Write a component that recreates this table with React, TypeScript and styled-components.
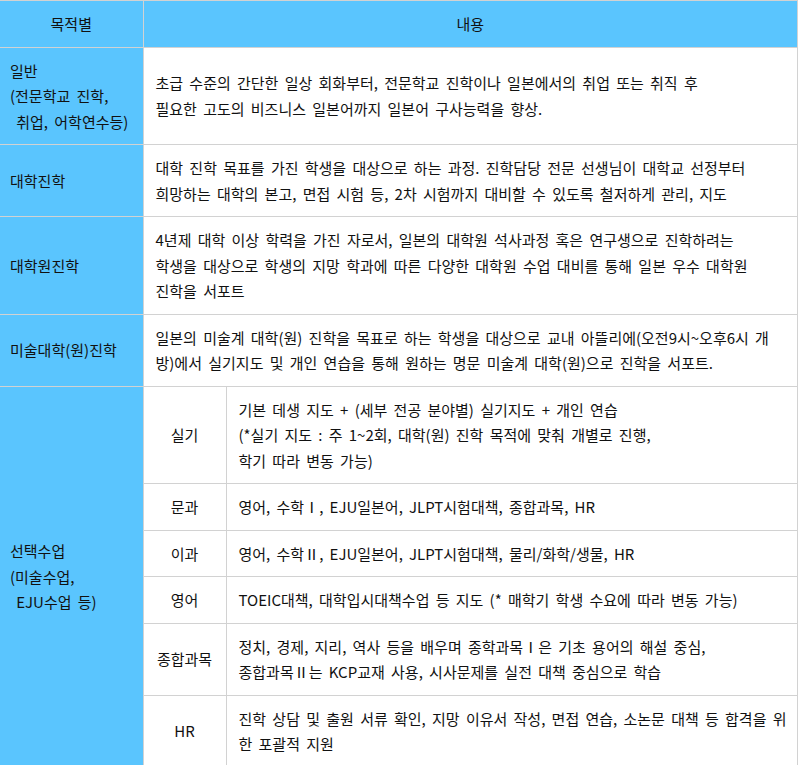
import React from 'react';
import styled, { createGlobalStyle } from 'styled-components';

const GlobalStyle = createGlobalStyle`
  html, body {
    margin: 0;
    padding: 0;
    background: #ffffff;
  }
  body {
    font-family: "Noto Sans CJK KR", "Noto Sans", sans-serif;
    color: #111111;
  }
`;

const BORDER = '#d2d2d2';
const BLUE = '#5ac5fe';

const Table = styled.table`
  width: 798px;
  table-layout: fixed;
  border-collapse: collapse;
  font-size: 15px;
  line-height: 25.5px;
  word-spacing: 2.9px;
`;

const HeadCell = styled.th<{ $first?: boolean }>`
  background: ${BLUE};
  border: 1px solid ${BORDER};
  border-left: ${props => (props.$first ? 'none' : `1px solid ${BORDER}`)};
  padding: 10px 12px;
  font-weight: normal;
  text-align: center;
  white-space: nowrap;
`;

const LabelCell = styled.td`
  background: ${BLUE};
  border: 1px solid ${BORDER};
  border-left: none;
  padding: 10px 10px;
  vertical-align: middle;
  white-space: nowrap;
`;

const SubLabelCell = styled.td`
  border: 1px solid ${BORDER};
  padding: 10px 4px;
  text-align: center;
  vertical-align: middle;
  white-space: nowrap;
`;

const ContentCell = styled.td`
  border: 1px solid ${BORDER};
  padding: 10px 12px;
  vertical-align: middle;
  white-space: nowrap;
`;

type Line = string[];

const Lines: React.FC<{ lines: Line }> = ({ lines }) => (
  <>
    {lines.map((l, i) => (
      <React.Fragment key={i}>
        {i > 0 && <br />}
        {l}
      </React.Fragment>
    ))}
  </>
);

const mainRows: { label: Line; content: Line }[] = [
  {
    label: ['일반', '(전문학교 진학,', '\u00a0취업, 어학연수등)'],
    content: [
      '초급 수준의 간단한 일상 회화부터, 전문학교 진학이나 일본에서의 취업 또는 취직 후',
      '필요한 고도의 비즈니스 일본어까지 일본어 구사능력을 향상.',
    ],
  },
  {
    label: ['대학진학'],
    content: [
      '대학 진학 목표를 가진 학생을 대상으로 하는 과정. 진학담당 전문 선생님이 대학교 선정부터',
      '희망하는 대학의 본고, 면접 시험 등, 2차 시험까지 대비할 수 있도록 철저하게 관리, 지도',
    ],
  },
  {
    label: ['대학원진학'],
    content: [
      '4년제 대학 이상 학력을 가진 자로서, 일본의 대학원 석사과정 혹은 연구생으로 진학하려는',
      '학생을 대상으로 학생의 지망 학과에 따른 다양한 대학원 수업 대비를 통해 일본 우수 대학원',
      '진학을 서포트',
    ],
  },
  {
    label: ['미술대학(원)진학'],
    content: [
      '일본의 미술계 대학(원) 진학을 목표로 하는 학생을 대상으로 교내 아뜰리에(오전9시~오후6시 개',
      '방)에서 실기지도 및 개인 연습을 통해 원하는 명문 미술계 대학(원)으로 진학을 서포트.',
    ],
  },
];

const electives: { name: string; content: Line }[] = [
  {
    name: '실기',
    content: [
      '기본 데생 지도 + (세부 전공 분야별) 실기지도 + 개인 연습',
      '(*실기 지도 : 주 1~2회, 대학(원) 진학 목적에 맞춰 개별로 진행,',
      '학기 따라 변동 가능)',
    ],
  },
  { name: '문과', content: ['영어, 수학Ⅰ, EJU일본어, JLPT시험대책, 종합과목, HR'] },
  { name: '이과', content: ['영어, 수학Ⅱ, EJU일본어, JLPT시험대책, 물리/화학/생물, HR'] },
  { name: '영어', content: ['TOEIC대책, 대학입시대책수업 등 지도 (* 매학기 학생 수요에 따라 변동 가능)'] },
  {
    name: '종합과목',
    content: [
      '정치, 경제, 지리, 역사 등을 배우며 종학과목Ⅰ은 기초 용어의 해설 중심,',
      '종합과목Ⅱ는 KCP교재 사용, 시사문제를 실전 대책 중심으로 학습',
    ],
  },
  {
    name: 'HR',
    content: [
      '진학 상담 및 출원 서류 확인, 지망 이유서 작성, 면접 연습, 소논문 대책 등 합격을 위',
      '한 포괄적 지원',
    ],
  },
];

export default function App() {
  return (
    <>
      <GlobalStyle />
      <Table>
        <colgroup>
          <col style={{ width: 143 }} />
          <col style={{ width: 83 }} />
          <col />
        </colgroup>
        <thead>
          <tr>
            <HeadCell $first>목적별</HeadCell>
            <HeadCell colSpan={2}>내용</HeadCell>
          </tr>
        </thead>
        <tbody>
          {mainRows.map((row, i) => (
            <tr key={i}>
              <LabelCell>
                <Lines lines={row.label} />
              </LabelCell>
              <ContentCell colSpan={2}>
                <Lines lines={row.content} />
              </ContentCell>
            </tr>
          ))}
          {electives.map((el, i) => (
            <tr key={el.name}>
              {i === 0 && (
                <LabelCell rowSpan={electives.length}>
                  <Lines lines={['선택수업', '(미술수업,', '\u00a0EJU수업 등)']} />
                </LabelCell>
              )}
              <SubLabelCell>{el.name}</SubLabelCell>
              <ContentCell>
                <Lines lines={el.content} />
              </ContentCell>
            </tr>
          ))}
        </tbody>
      </Table>
    </>
  );
}
